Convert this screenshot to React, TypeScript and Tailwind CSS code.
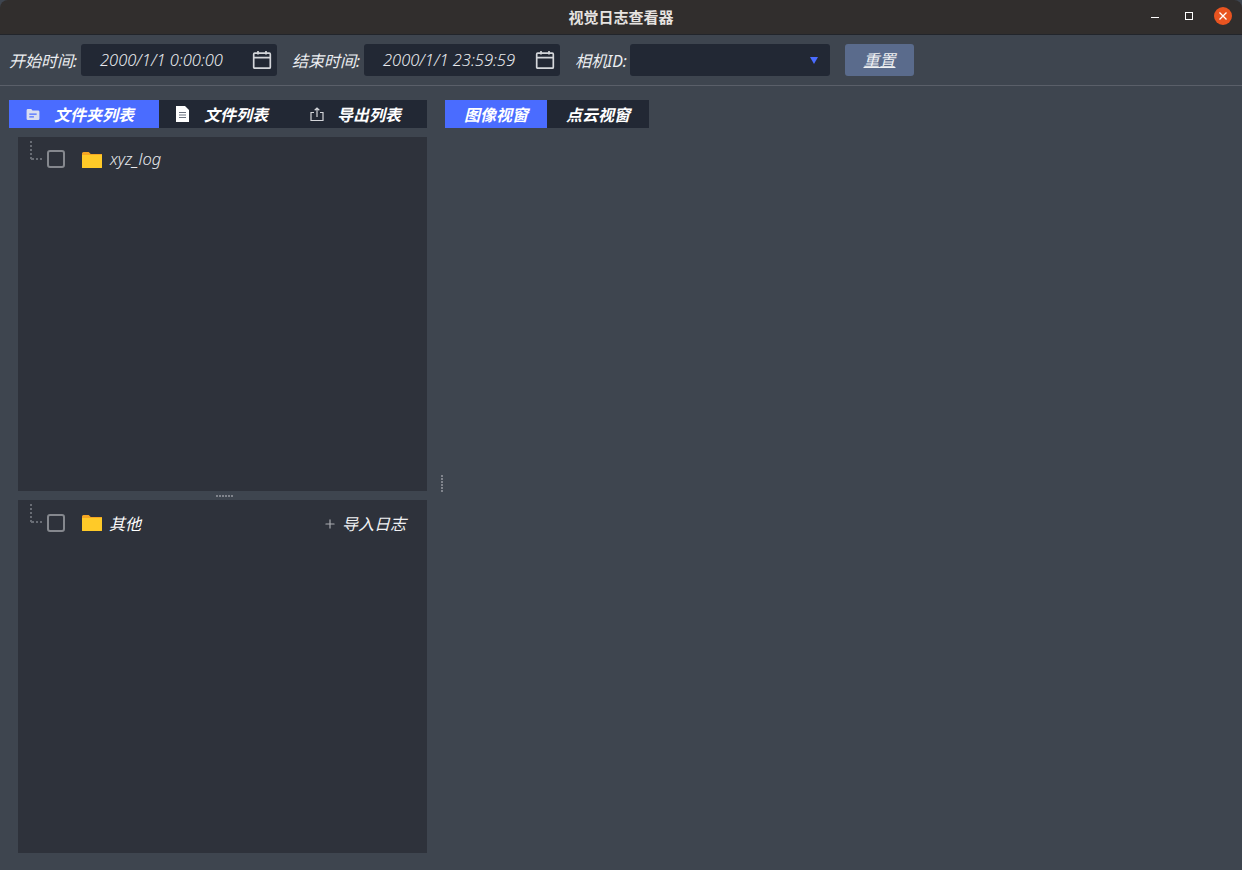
import { Plus } from 'lucide-react'

const FONT = 'font-["Noto_Sans","Noto_Sans_CJK_SC",sans-serif]'

function CalendarIcon() {
  return (
    <svg width="20" height="20" viewBox="0 0 20 20" fill="none" stroke="#d4d6da" strokeWidth="1.7">
      <rect x="1.7" y="3.2" width="16.6" height="15" rx="1" />
      <path d="M1.700 7.700h16.600M6 1v3.600M14 1v3.600" />
    </svg>
  )
}

function FolderIcon() {
  return (
    <svg width="20" height="16" viewBox="0 0 20 16">
      <path d="M0 1.500A1.500 1.500 0 0 1 1.500 0h5.200l2 2H20v14H0z" fill="#f5a623" />
      <path d="M0 3h20v12a1 1 0 0 1-1 1H1a1 1 0 0 1-1-1z" fill="#ffca28" />
    </svg>
  )
}

function FolderTabIcon() {
  return (
    <svg width="14" height="11" viewBox="0 0 14 12">
      <path d="M0 1.500A1.500 1.500 0 0 1 1.500 0h3.600l1.300 1.600h6A1.500 1.500 0 0 1 14 3.100v7.400a1.500 1.500 0 0 1-1.500 1.500h-11A1.500 1.500 0 0 1 0 10.500z" fill="#d9def0" />
      <path d="M3 5h8v1.400H3zM3 7.800h5v1.400H3z" fill="#4a6cff" />
    </svg>
  )
}

function FileIcon() {
  return (
    <svg width="13" height="16" viewBox="0 0 13 16">
      <path d="M0 0h9l4 4v12H0z" fill="#ffffff" />
      <path d="M3 6h7v1H3zM3 8.500h7v1H3zM3 11h7v1H3z" fill="#6b7280" />
    </svg>
  )
}

function ExportIcon() {
  return (
    <svg width="14" height="14" viewBox="0 0 14 14" fill="none" stroke="#d4d6da" strokeWidth="1.200">
      <path d="M4 5.500H1v8h12v-8h-3M7 10V1M4.700 3.200 7 1l2.300 2.200" />
    </svg>
  )
}

function TreeLine() {
  return (
    <svg width="12" height="20" viewBox="0 0 12 20" fill="#686c74" className="shrink-0">
      <path d="M0 0h2v2H0zM0 4h2v2H0zM0 8h2v2H0zM0 12h2v2H0zM0 16h2v2H0zM1 17h3v2H1zM6 17h2v2H6zM10 17h2v2h-2z" />
    </svg>
  )
}

function Checkbox() {
  return <div className="w-[18px] h-[18px] rounded-[3px] border-2 border-[#85888e] shrink-0" />
}

function DateField({ value }: { value: string }) {
  return (
    <div className="w-[196px] h-[32px] bg-[#222834] rounded-[3px] flex items-center justify-between pl-[19px] pr-[5px]">
      <span className="text-[16.5px] font-light italic text-[#e8eaee]">{value}</span>
      <CalendarIcon />
    </div>
  )
}

function Tab({ label, active, icon, width, gap, pad }: { label: string; active?: boolean; icon?: React.ReactNode; width: string; gap?: string; pad: string }) {
  return (
    <div className={`h-[28px] flex items-center italic font-bold text-white text-[16px] ${width} ${pad} ${gap ?? ''} ${active ? 'bg-[#4a6cff]' : 'bg-[#222834]'}`}>
      {icon && <span className="flex w-[16px] justify-center shrink-0">{icon}</span>}
      <span className="whitespace-nowrap pt-[2px]">{label}</span>
    </div>
  )
}

function TreeRow({ children }: { children: React.ReactNode }) {
  return (
    <div className="flex items-start pl-[12px] pt-[4px] pr-[20px]">
      <TreeLine />
      <div className="flex items-center flex-1 ml-[5px] mt-[6px]">
        <Checkbox />
        <span className="ml-[17px] mt-[1px] shrink-0"><FolderIcon /></span>
        {children}
      </div>
    </div>
  )
}

export default function App() {
  return (
    <div className={`w-[1242px] h-[870px] overflow-hidden bg-[#3e454f] flex flex-col ${FONT}`}>
      {/* title bar */}
      <div className="relative h-[35px] shrink-0 bg-[#312e2d] border-b border-[#22252b] rounded-t-[8px] flex items-center justify-center">
        <span className="text-[15px] font-bold text-[#e6e3e0]">视觉日志查看器</span>
        <div className="absolute right-[10px] top-[7px] flex items-center">
          <div className="w-[8px] h-[1px] bg-white mt-[3px]" />
          <div className="w-[8px] h-[8px] border border-white ml-[26px]" />
          <div className="w-[18px] h-[18px] ml-[21px] rounded-full bg-[#e95420] flex items-center justify-center">
            <svg width="8" height="8" viewBox="0 0 8 8" stroke="#fff" strokeWidth="1.300">
              <path d="M0.500 0.500l7 7M7.500 0.500l-7 7" />
            </svg>
          </div>
        </div>
      </div>

      {/* filter bar */}
      <div className="h-[51px] shrink-0 border-b border-[#5a5f69] flex items-start pt-[9px] pl-[9px]">
        <div className="h-[32px] flex items-center text-[16px] italic text-[#eceef1]">
          <span className="w-[72px] pt-[2px] whitespace-nowrap">开始时间:</span>
          <DateField value="2000/1/1 0:00:00" />
          <span className="w-[72px] ml-[15px] pt-[2px] whitespace-nowrap">结束时间:</span>
          <DateField value="2000/1/1 23:59:59" />
          <span className="w-[55px] ml-[15px] pt-[2px] whitespace-nowrap">相机ID:</span>
          <div className="w-[200px] h-[32px] bg-[#222834] rounded-[3px] flex items-center justify-end pr-[12px]">
            <svg width="8" height="7" viewBox="0 0 8 7" fill="#4a6cff">
              <path d="M0 0h8L4 7z" />
            </svg>
          </div>
          <div className="w-[69px] h-[32px] ml-[15px] bg-[#5a6b8c] rounded-[3px] flex items-center justify-center underline text-[#f0f1f3]">
            重置
          </div>
        </div>
      </div>

      {/* content */}
      <div className="flex-1 min-h-0 flex pt-[14px] pl-[9px] pb-[17px]">
        <div className="w-[418px] shrink-0 flex flex-col">
          <div className="flex">
            <Tab label="文件夹列表" active width="w-[150px]" pad="pl-[16px]" gap="gap-[13px]" icon={<FolderTabIcon />} />
            <Tab label="文件列表" width="w-[134px]" pad="pl-[15px]" gap="gap-[14px]" icon={<FileIcon />} />
            <Tab label="导出列表" width="w-[134px]" pad="pl-[16px]" gap="gap-[12px]" icon={<ExportIcon />} />
          </div>
          <div className="flex-1 min-h-0 flex flex-col mt-[9px] ml-[9px]">
            <div className="flex-1 bg-[#2e323b]">
              <TreeRow>
                <span className="ml-[8px] text-[16.5px] font-light italic text-[#e8eaee]">xyz_log</span>
              </TreeRow>
            </div>
            <div className="h-[9px] shrink-0 flex items-center justify-center">
              <div className="w-[18px] h-[2px] mt-[1px] ml-[4px] bg-[repeating-linear-gradient(90deg,#80848c_0,#80848c_2px,transparent_2px,transparent_3px)]" />
            </div>
            <div className="flex-1 bg-[#2e323b]">
              <TreeRow>
                <span className="ml-[7px] mt-[2px] text-[16px] italic text-white">其他</span>
                <div className="ml-auto mt-[2px] -translate-x-px flex items-center gap-[5px] text-[16px] italic text-[#f0f1f3]">
                  <Plus size={14} color="#a9acb2" strokeWidth={2} />
                  <span>导入日志</span>
                </div>
              </TreeRow>
            </div>
          </div>
        </div>

        {/* splitter */}
        <div className="w-[18px] shrink-0 flex items-center justify-end pr-[2px] pt-[14px]">
          <div className="w-[2px] h-[17px] bg-[repeating-linear-gradient(180deg,#80848c_0,#80848c_2px,transparent_2px,transparent_3px)]" />
        </div>

        <div className="flex self-start">
          <Tab label="图像视窗" active width="w-[102px]" pad="justify-center" />
          <Tab label="点云视窗" width="w-[102px]" pad="justify-center" />
        </div>
      </div>
    </div>
  )
}
